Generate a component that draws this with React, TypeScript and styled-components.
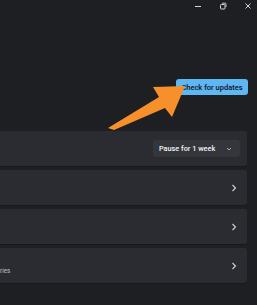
import React from 'react';
import styled, { createGlobalStyle } from 'styled-components';

const GlobalStyle = createGlobalStyle`
  html, body {
    margin: 0;
    padding: 0;
    background: #1d1f23;
    overflow: hidden;
  }
  body {
    font-family: Roboto, "Liberation Sans", sans-serif;
  }
`;

const Page = styled.div`
  position: relative;
  width: 257px;
  height: 305px;
  background: #1d1f23;
`;

const TitleBar = styled.div`
  display: flex;
  justify-content: flex-end;
  align-items: center;
  height: 12px;
  padding-right: 4px;
  gap: 15px;
`;

const WinButton = styled.div`
  width: 10px;
  height: 10px;
  display: flex;
  align-items: center;
  justify-content: center;
  color: #d6d6d6;
`;

const Header = styled.div`
  display: flex;
  justify-content: flex-end;
  padding: 67px 9px 0 0;
`;

const PrimaryButton = styled.button`
  height: 16px;
  width: 72px;
  border: none;
  border-radius: 3px;
  background: #5eb6f2;
  color: #0e141a;
  font-family: Roboto, "Liberation Sans", sans-serif;
  font-size: 7.5px;
  font-weight: 500;
  padding: 0;
  display: flex;
  align-items: center;
  justify-content: center;
`;

const List = styled.div`
  display: flex;
  flex-direction: column;
  gap: 4px;
  margin-top: 36px;
  margin-right: 10px;
`;

const Card = styled.div`
  height: 35px;
  background: #2a2c32;
  border-radius: 0 3px 3px 0;
  display: flex;
  align-items: center;
  justify-content: space-between;
  padding-right: 7px;
  box-shadow: 0 1px 0 #18191c;
`;

const Caption = styled.div`
  align-self: flex-end;
  margin-bottom: 8px;
  font-size: 6.3px;
  color: #bfc2c7;
`;

const Dropdown = styled.div`
  width: 87px;
  height: 17px;
  box-sizing: border-box;
  background: #34363c;
  border-radius: 3px;
  display: flex;
  align-items: center;
  justify-content: space-between;
  padding: 0 8px 0 6px;
  color: #f2f3f5;
  font-size: 7.3px;
  font-weight: 500;
`;

const Chevron = styled.div`
  display: flex;
  align-items: center;
  color: #d0d2d6;
  margin-right: 3px;
`;

const ArrowLayer = styled.svg`
  position: absolute;
  left: 0;
  top: 0;
  pointer-events: none;
`;

const ChevronRight = () => (
  <Chevron>
    <svg width="6" height="8" viewBox="0 0 6 8">
      <path d="M1.5 1 L4.5 4 L1.5 7" fill="none" stroke="currentColor" strokeWidth="1.1" />
    </svg>
  </Chevron>
);

export default function App() {
  return (
    <Page>
      <GlobalStyle />
      <TitleBar>
        <WinButton>
          <svg width="8" height="8" viewBox="0 0 8 8">
            <path d="M1 4.5 H7" stroke="currentColor" strokeWidth="1" />
          </svg>
        </WinButton>
        <WinButton>
          <svg width="8" height="8" viewBox="0 0 8 8">
            <rect x="1.5" y="2.5" width="4.5" height="4.5" rx="0.8" fill="none" stroke="currentColor" strokeWidth="1" />
            <path d="M3 1.2 H6.2 Q7 1.2 7 2 V5" fill="none" stroke="currentColor" strokeWidth="0.9" />
          </svg>
        </WinButton>
        <WinButton>
          <svg width="8" height="8" viewBox="0 0 8 8">
            <path d="M1.5 1.5 L6.5 6.5 M6.5 1.5 L1.5 6.5" stroke="currentColor" strokeWidth="1" />
          </svg>
        </WinButton>
      </TitleBar>

      <Header>
        <PrimaryButton>Check for updates</PrimaryButton>
      </Header>

      <List>
        <Card>
          <span />
          <Dropdown>
            <span>Pause for 1 week</span>
            <svg width="6" height="4" viewBox="0 0 6 4">
              <path d="M1 1 L3 3 L5 1" fill="none" stroke="#b8bbc0" strokeWidth="0.9" />
            </svg>
          </Dropdown>
        </Card>
        <Card>
          <span />
          <ChevronRight />
        </Card>
        <Card>
          <span />
          <ChevronRight />
        </Card>
        <Card>
          <Caption>ries</Caption>
          <ChevronRight />
        </Card>
      </List>

      <ArrowLayer width="257" height="305" viewBox="0 0 257 305">
        <polygon
          points="108,128 159,97 153,87 185,86 172,117 165,108 114,130"
          fill="#f7902b"
        />
      </ArrowLayer>
    </Page>
  );
}
